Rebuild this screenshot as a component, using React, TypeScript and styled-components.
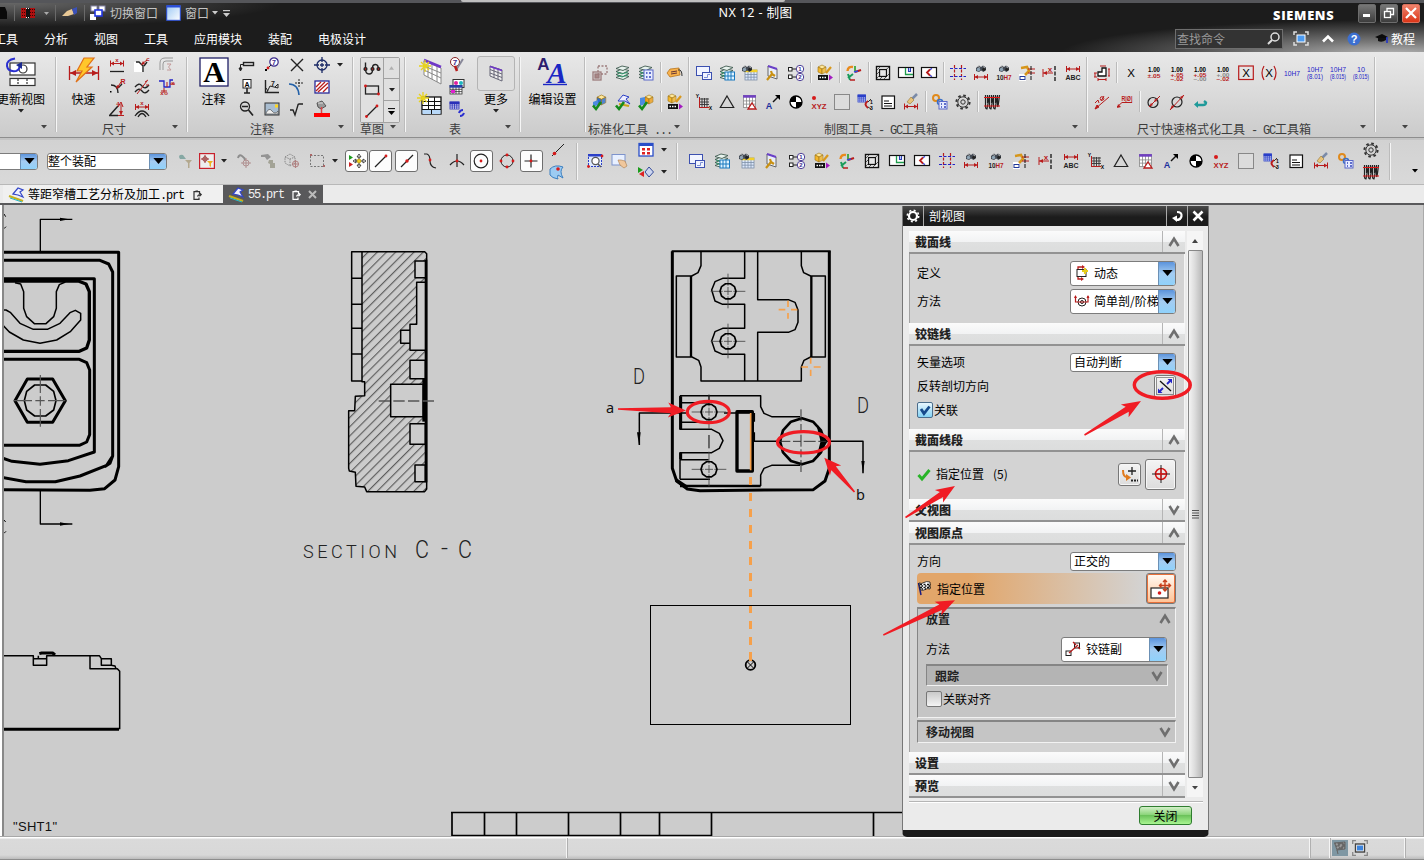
import React from "react";
import styled, { createGlobalStyle } from "styled-components";

const cjk = `"Noto Sans CJK SC", "Liberation Sans", sans-serif`;

const GlobalStyle = createGlobalStyle`
  * { box-sizing: border-box; }
  body { margin: 0; background: #ccc; overflow: hidden; font-family: ${cjk}; font-size: 12px; color: #000; }
  svg { display: block; flex: none; overflow: visible; }
`;

/* ---------- frame ---------- */
const Page = styled.div`
  position: relative;
  width: 1424px;
  height: 860px;
  display: flex;
  flex-direction: column;
  overflow: hidden;
  white-space: nowrap;
  line-height: 16px;
`;
const TopEdge = styled.div`
  height: 3px;
  flex: none;
  background: #55565a;
  padding-left: 461px;
`;
const TopEdgeTab = styled.div`
  width: 324px;
  height: 2px;
  background: #bfbfbf;
  border-radius: 0 0 4px 4px;
`;
const TitleArea = styled.header`
  height: 49px;
  flex: none;
  color: #fff;
  background:
    radial-gradient(ellipse 330px 34px at 1390px 51px, #b4b4b4 0%, #7a7a7a 35%, rgba(28, 28, 28, 0) 100%),
    radial-gradient(ellipse 270px 24px at 10px 0, #666 0%, rgba(28, 28, 28, 0) 100%),
    #1c1c1c;
`;
const TitleRow = styled.div`
  height: 22px;
  display: flex;
  align-items: center;
`;
const Quick = styled.div`
  display: flex;
  align-items: center;
  width: 719px;
  color: #c4c4c4;
  margin-top: -2px;
`;
const QuickSep = styled.i`
  width: 1px;
  height: 16px;
  background: #6a6a6a;
`;
const Gap = styled.i<{ $w: number }>`
  width: ${(p) => p.$w}px;
  flex: none;
`;
const AppTitle = styled.div`
  width: 554px;
  font-family: "Noto Sans", "Noto Sans CJK SC", sans-serif;
  font-size: 12.6px;
  letter-spacing: 0.35px;
  padding-bottom: 2px;
`;
const Brand = styled.div`
  width: 86px;
  font-family: "Open Sans", sans-serif;
  font-weight: 800;
  font-size: 12.8px;
  letter-spacing: 0.7px;
  padding: 1px 0 0 1px;
`;
const WinButton = styled.div<{ $close?: boolean }>`
  width: 18px;
  height: 19px;
  margin: -2px 4px 0 0;
  border-radius: 2px;
  border: 1px solid ${(p) => (p.$close ? "#d8705c" : "#6d6d6d")};
  background: ${(p) => (p.$close ? "linear-gradient(#f0836c,#dc3517)" : "linear-gradient(#777,#3d3d3d)")};
  display: flex;
  align-items: center;
  justify-content: center;
`;
const MenuRow = styled.div`
  height: 27px;
  display: flex;
  align-items: center;
`;
const Menu = styled.nav`
  display: flex;
  gap: 26px;
  margin-left: -6px;
  width: 1181px;
`;
const Search = styled.div`
  width: 108px;
  height: 20px;
  border: 1px solid #6e6e6e;
  background: #333;
  color: #999;
  display: flex;
  align-items: center;
  justify-content: space-between;
  padding: 0 2px 0 1px;
`;

/* ---------- ribbon ---------- */
const Ribbon = styled.div`
  height: 86px;
  flex: none;
  display: flex;
  background: linear-gradient(#e8e8e8, #dadada 50%, #cbcbcb);
  border-bottom: 1px solid #8e8e8e;
`;
const Group = styled.section<{ $w: number; $last?: boolean }>`
  width: ${(p) => p.$w}px;
  flex: none;
  display: flex;
  flex-direction: column;
  background: ${(p) => (p.$last ? "none" : "linear-gradient(90deg,#bcbcbc 1px,#f6f6f6 1px) right 5px / 2px 75px no-repeat")};
`;
const GroupBody = styled.div<{ $l?: number }>`
  height: 70px;
  display: flex;
  flex: none;
  padding-left: ${(p) => p.$l || 0}px;
`;
const Caption = styled.div<{ $l: number }>`
  display: flex;
  height: 15px;
  padding-left: ${(p) => p.$l}px;
  padding-right: 10px;
  color: #3c3c3c;
  line-height: 13px;
`;
const Launcher = styled.span`
  margin: 3px 0 0 auto;
`;
const Big = styled.div<{ $w: number }>`
  width: ${(p) => p.$w}px;
  flex: none;
  display: flex;
  flex-direction: column;
  align-items: center;
  padding-top: 5px;
`;
const BigLabel = styled.div`
  margin: 3px 0 1px;
  line-height: 18px;
`;
const IconGrid = styled.div<{ $cols: string }>`
  display: grid;
  grid-template-columns: ${(p) => p.$cols};
  grid-auto-rows: 22px;
  align-items: center;
  justify-items: center;
  align-self: flex-start;
  padding-top: 2px;
`;
const ToolRows = styled.div`
  padding: 6px 0 0 2.5px;
`;
const ToolRow = styled.div`
  display: flex;
  height: 29px;
  align-items: center;
`;
const Cell = styled.span<{ $w?: number }>`
  width: ${(p) => p.$w || 23}px;
  flex: none;
  display: flex;
  align-items: center;
  justify-content: center;
`;
const ToolSep = styled.i<{ $h?: number }>`
  width: 2px;
  height: ${(p) => p.$h || 21}px;
  margin: 0 2px;
  flex: none;
  background: linear-gradient(90deg, #bbb 1px, #f5f5f5 1px);
`;
const Half = styled.span`
  font-family: "Liberation Mono", monospace;
  letter-spacing: -1.2px;
`;
const Gallery = styled.div`
  display: grid;
  width: 40px;
  height: 66px;
  margin-top: 5px;
  grid-template-columns: 23px 15px;
  border: 1px solid #a2a2a2;
  border-radius: 2px;
`;
const GalleryItems = styled.div`
  display: grid;
  grid-template-rows: repeat(3, 1fr);
  place-items: center;
  background: #e0e0e0;
  border-right: 1px solid #a2a2a2;
`;
const GalleryNav = styled(GalleryItems)`
  border: 0;
  > * { width: 100%; height: 100%; display: grid; place-items: center; border-bottom: 1px solid #a2a2a2; }
  > *:last-child { border: 0; }
`;
const MoreFrame = styled.div`
  width: 38px;
  height: 35px;
  margin: -1px 0 -4px;
  border: 1px solid #b4b4b4;
  border-radius: 3px;
  background: #dedede;
  display: grid;
  place-items: center;
`;

/* ---------- selection bar ---------- */
const SelectBar = styled.div`
  height: 46px;
  flex: none;
  display: flex;
  align-items: center;
  padding-bottom: 2px;
  background: linear-gradient(#d2d2d2, #d9d9d9);
  border-top: 2px solid #c4c4c4;
`;
const ComboBox = styled.div<{ $w: number; $h: number; $ml?: number }>`
  width: ${(p) => p.$w}px;
  height: ${(p) => p.$h}px;
  margin-left: ${(p) => p.$ml || 0}px;
  flex: none;
  display: flex;
  align-items: stretch;
  background: #fff;
  border: 1px solid #7c7c7c;
  border-radius: 3px;
  overflow: hidden;
`;
const ComboText = styled.div<{ $tight?: boolean }>`
  flex: 1;
  display: flex;
  align-items: center;
  gap: 5px;
  overflow: hidden;
  padding-left: ${(p) => (p.$tight ? 0 : 3)}px;
`;
const ComboArrow = styled.div`
  width: 17px;
  flex: none;
  display: grid;
  place-items: center;
  border-left: 1px solid #6b90b5;
  background: linear-gradient(#5b93dc, #a4ccf1 50%, #8fd2fb);
`;
const Toggle = styled.span`
  width: 23px;
  height: 22px;
  flex: none;
  display: grid;
  place-items: center;
  background: #fdfdfd;
  border: 1px solid #6e6e6e;
  border-radius: 3px;
`;
const Stack = styled.span<{ $w: number }>`
  width: ${(p) => p.$w}px;
  height: 44px;
  flex: none;
  display: flex;
  flex-direction: column;
  align-items: center;
  justify-content: space-around;
`;

/* ---------- tabs ---------- */
const Tabs = styled.div`
  height: 21px;
  flex: none;
  display: flex;
  padding-left: 3px;
  background: #ebebeb;
  border-top: 1px solid #b8b8b8;
  border-bottom: 2px solid #59595b;
`;
const Tab = styled.div<{ $active?: boolean }>`
  width: ${(p) => (p.$active ? 100 : 220)}px;
  display: flex;
  align-items: center;
  padding: 1px 0 0 6px;
  color: ${(p) => (p.$active ? "#f2f2f2" : "#000")};
  background: ${(p) => (p.$active ? "#59595b" : "#f0f0f0")};
  gap: 3px;
`;

/* ---------- workspace ---------- */
const Workspace = styled.main`
  height: 632px;
  flex: none;
  padding-left: 2px;
  background: #fff;
  border-bottom: 1px solid #a8a8a8;
`;
const Sheet = styled.div`
  height: 631px;
  overflow: hidden;
  background: #ccc;
  border-left: 2px solid #888;
  border-right: 1px solid #aaa;
`;
const StatusBar = styled.footer`
  height: 23px;
  flex: none;
  display: flex;
  align-items: center;
  background: linear-gradient(#fff 1px, #dadada 2px, #d8d8d8 18px, #bcbcbc);
  border-bottom: 1px solid #8d8d8d;
`;
const StatusCell = styled.div<{ $w: number }>`
  width: ${(p) => p.$w}px;
  height: 20px;
  display: flex;
  align-items: center;
  gap: 4px;
  padding-left: 2px;
  border-right: 1px solid #f5f5f5;
  box-shadow: 1px 0 #b0b0b0;
`;

/* ---------- dialog ---------- */
const Dialog = styled.aside`
  position: absolute;
  left: 902px;
  top: 206px;
  width: 307px;
  height: 631px;
  background: #ebebeb;
  border: 1px solid #777;
  border-top: 0;
  border-bottom: 7px solid #1c1c1c;
  border-radius: 0 0 5px 5px;
`;
const DialogTitle = styled.div`
  height: 20px;
  display: flex;
  align-items: center;
  color: #fff;
  background: linear-gradient(#4a4a4a, #1c1c1c 55%);
`;
const TitleCell = styled.span<{ $w: number }>`
  width: ${(p) => p.$w}px;
  height: 20px;
  padding-left: ${(p) => (p.$w > 40 ? 5 : 0)}px;
  display: flex;
  align-items: center;
  justify-content: ${(p) => (p.$w > 40 ? "flex-start" : "center")};
  border-right: 1px solid ${(p) => (p.$w === 20 ? "transparent" : "#aaa")};
`;
const DialogMain = styled.div`
  display: flex;
  padding: 5px 5px 0 6px;
  gap: 2px;
`;
const Sections = styled.div`
  width: 276px;
`;
const Head = styled.div`
  height: 23px;
  display: flex;
  font-weight: 700;
  color: #222;
  background: linear-gradient(#fbfbfb, #f2f3f4 50%, #dfe0e0 52%, #dcdddd);
  border-bottom: 2px solid #929292;
  > b { flex: 1; padding: 3px 0 0 6px; }
  > i { width: 23px; border-left: 1px solid #b5b5b5; display: grid; place-items: center; }
`;
const Body = styled.div<{ $h: number; $t: number }>`
  height: ${(p) => p.$h}px;
  padding: ${(p) => p.$t}px 8px 0 7px;
  background: #d3d3d3;
  border-left: 1px solid #a3a3a3;
  border-right: 1px solid #f4f4f4;
`;
const Row = styled.div<{ $h: number }>`
  height: ${(p) => p.$h}px;
  display: flex;
  align-items: center;
  justify-content: space-between;
`;
const MethodRow = styled(Row)`
  margin-top: 5px;
`;
const Left = styled.span`
  display: flex;
  align-items: center;
  gap: 5px;
`;
const Count = styled.span`
  padding-left: 4px;
`;
const Right = styled(Left)`
  gap: 4px;
`;
const Check = styled.i<{ $on?: boolean }>`
  width: 16px;
  height: 16px;
  margin-right: -4px;
  border: 1px solid ${(p) => (p.$on ? "#4b6d8c" : "#777")};
  border-radius: 2px;
  background: ${(p) => (p.$on ? "linear-gradient(#e8f6ff,#84d3f5)" : "linear-gradient(#c9c9c9,#f4f4f4)")};
`;
const PushButton = styled.span<{ $w: number; $h: number; $hot?: boolean }>`
  width: ${(p) => p.$w}px;
  height: ${(p) => p.$h}px;
  display: grid;
  place-items: center;
  border: 1px solid #777;
  border-radius: 3px;
  box-shadow: inset 0 0 0 1px ${(p) => (p.$hot ? "#e8703a" : "#f6f6f6")};
  background: ${(p) => (p.$hot ? "linear-gradient(#fffaf4,#ffc294)" : "linear-gradient(#f4f4f4,#dcdcdc)")};
`;
const HotRow = styled(Row)`
  margin: 2px 0 3px;
  border-radius: 4px;
  background: linear-gradient(90deg, #e2a66a 0, #e2a66a 20%, #d3d3d3 88%);
`;
const SubPanel = styled.div<{ $h: number }>`
  height: ${(p) => p.$h}px;
  background: #c5c5c5;
  border: 1px solid #f2f2f2;
  border-top: 2px solid #858585;
  border-left-color: #858585;
  padding: 0 8px;
`;
const MovePanel = styled(SubPanel)`
  margin-top: 2px;
`;
const SubHead = styled.div<{ $h: number }>`
  height: ${(p) => p.$h}px;
  display: flex;
  align-items: center;
  justify-content: space-between;
  font-weight: 700;
  color: #222;
  margin-right: -4px;
`;
const TrackHead = styled(SubHead)`
  margin: 0 -1px 5px 0;
  padding: 0 4px 0 8px;
  background: #b4b4b4;
  border: 1px solid #f2f2f2;
  border-top: 2px solid #858585;
  border-left-color: #858585;
`;
const Scroll = styled.div`
  width: 16px;
  height: 566px;
  display: flex;
  flex-direction: column;
  align-items: center;
  background: #f5f5f5;
`;
const Thumb = styled.div`
  width: 15px;
  height: 528px;
  border: 1px solid #888;
  border-radius: 1px;
  background: linear-gradient(90deg, #f3f3f3, #dcdcdc 45%, #b9b9b9);
  display: grid;
  place-items: center;
`;
const ScrollBtn = styled.div`
  height: 19px;
  display: grid;
  place-items: center;
`;
const DialogFoot = styled.div`
  margin: 3px 5px 0 6px;
  height: 30px;
  border-top: 1px solid #b5b5b5;
  box-shadow: inset 0 1px #fff;
  display: flex;
  justify-content: flex-end;
  padding: 4px 11px 0 0;
`;
const CloseBtn = styled.div`
  width: 53px;
  height: 19px;
  border: 1px solid #2f7d2f;
  border-radius: 3px;
  text-align: center;
  line-height: 17px;
  background: linear-gradient(#d3f0c8, #8dd57c 45%, #6cc25b 50%, #a9f591);
`;
const Overlay = styled.svg`
  position: absolute;
  left: 0;
  top: 0;
  pointer-events: none;
`;

/* ---------- icons ---------- */
const R = "#b81c1c";
const B = "#2323c8";
const Dn = ({ c = "#222", w = 6 }: { c?: string; w?: number }) => (
  <svg width={w} height={w / 2 + 0.5} viewBox="0 0 6 3.5"><path d="M0 0H6L3 3.5Z" fill={c} /></svg>
);
const Chev = ({ up }: { up?: boolean }) => (
  <svg width="12" height="10" viewBox="0 0 12 10"><path d={up ? "M1.500 9 6 1.800 10.500 9" : "M1.500 1 6 8.200 10.500 1"} fill="none" stroke="#6f6f6f" strokeWidth="2.600" /></svg>
);
const T = ({ x = 8, y, s = 6, c = "#000", w = 700, len, children }: any) => (
  <text x={x} y={y} fontSize={s} fill={c} fontWeight={w} textAnchor="middle" textLength={len} lengthAdjust="spacingAndGlyphs" fontFamily="Liberation Sans, sans-serif">{children}</text>
);
const Bino = ({ x = 0, y = 0 }) => (
  <g transform={`translate(${x} ${y})`}>
    <path d="M1 3 4 .5 6 2 8 .5 11 2.500V5L8.500 7 6 5.500 4 7 1 6Z" fill="#444b55" />
    <circle cx="3.500" cy="4.500" r="1.700" fill="#8fa5b5" /><circle cx="9" cy="4.300" r="1.700" fill="#222" /><path d="M3 1.500 5 2.500M8 1.500 10 3" stroke="#aaa" />
  </g>
);
const DimH = ({ y = 13, x1 = 1.5, x2 = 14.5 }) => (
  <g stroke={R} fill={R}><path d={`M${x1} ${y - 3}v6M${x2} ${y - 3}v6M${x1} ${y}H${x2}`} fill="none" /><path d={`M${x1} ${y}l3.500-2v4zM${x2} ${y}l-3.500-2v4z`} stroke="none" /></g>
);
const Mesh = ({ x = 1, y = 1, w = 13, h = 12, head = "#7040c0", fill = "#fff", line = "#888" }) => (
  <g>
    <rect x={x} y={y} width={w} height={h} fill={fill} stroke={line} strokeWidth=".8" />
    <path d={`M${x} ${y + h * 0.45}h${w}M${x} ${y + h * 0.72}h${w}M${x + w * 0.25} ${y}v${h}M${x + w * 0.5} ${y}v${h}M${x + w * 0.75} ${y}v${h}`} stroke={line} strokeWidth=".8" />
    <rect x={x - 0.4} y={y - 0.4} width={w + 0.8} height="2.600" fill={head} />
  </g>
);
const Layers = () => (
  <g fill="#e8f3ee" stroke="#3f5a50" strokeWidth=".9">
    {[11, 8, 5, 2].map((y) => <path key={y} d={`M1 ${y + 1.5} 7 ${y - 1} 14 ${y + 0.5} 8 ${y + 3.5}Z`} />)}
    <path d="M2 7l5 2 6-2M2 10l5 2 6-2" fill="none" stroke="#2c9a6c" />
  </g>
);
const Cube = ({ x = 0, y = 0, c = "#f4b72b", s = 1 }) => (
  <g transform={`translate(${x} ${y}) scale(${s})`} stroke="#9a7010" strokeWidth=".6">
    <path d="M0 2 4 0 8 2 4 4Z" fill="#ffe89a" /><path d="M0 2 4 4V9L0 7Z" fill={c} /><path d="M8 2 4 4V9L8 7Z" fill={c} opacity=".8" />
  </g>
);
const Tick = () => <path d="M1 11.500 4 15 9 8" fill="none" stroke="#158a1c" strokeWidth="2.600" />;
const Dot = ({ x, y, r = 1.4 }: any) => <circle cx={x} cy={y} r={r} fill="#d61a1a" />;
const Gear = ({ c = "#333" }) => (
  <g fill="none" stroke={c}><circle cx="8" cy="8" r="6.600" strokeWidth="2" strokeDasharray="2.600 2.584" /><circle cx="8" cy="8" r="5.200" /><circle cx="8" cy="8" r="2.200" /></g>
);
const Tol = ({ a, b, ca = R, cb = R }: any) => (
  <g><T y={6.5} s={6.8} len={12}>1.00</T><T y={b ? 11.6 : 13} s={5} c={ca} len={13}>{a}</T>{b && <T y={16.200} s={5} c={cb} len={13}>{b}</T>}</g>
);
const Fit = ({ a, b }: any) => (
  <g><T y={6.500} s={7} w={400} c={B} len={a.length * 4}>{a}</T><T y={14} s={7} w={400} c={B} len={16}>{b}</T></g>
);

const art: Record<string, React.ReactNode> = {
  dimLin: <g><DimH y={6.500} /><T y={4.500} s={6} c={R}>x</T><path d="M1 14.500H15" stroke="#222" strokeWidth="1.300" /></g>,
  dimCh: <g><path d="M0 5H5L10 10V15H0Z" fill="#fff" /><path d="M2 5H5L9 9V15M10 9 13 5" fill="none" stroke="#222" strokeWidth="1.400" /><path d="M7 8 9 4 11 7Z" fill={R} /><path d="M8 7 13 3" stroke={R} /><T x={14} y={4} s={6} c={R}>c</T></g>,
  dimArc: <g fill="none" stroke="#999"><path d="M1 13V6Q1 1 6 1H14M4 13V7Q4 4 7 4H14" /><path d="M8 7H12L9.500 10 12 13H8" stroke="#c49a9a" /></g>,
  dimRad: <g><path d="M2 6Q9 6 9 14M9 9 13 5" fill="none" stroke="#222" strokeWidth="1.400" /><path d="M8 9 12 3" stroke={R} /><path d="M7 10 8 6 11 8Z" fill={R} /><T x={14} y={5} s={7} c={R}>R</T><rect x="1" y="12" width="1.500" height="1.500" /></g>,
  dimThk: <g fill="none"><path d="M1 8Q5 3 8 7T15 6M1 13Q5 8 8 12T15 11" stroke="#222" strokeWidth="1.300" /><path d="M3 15 13 2M11 3l3-2M12 6h3" stroke={R} /></g>,
  dimOrd: <g fill="none"><path d="M0 2H5V8H11V1H14" stroke={B} strokeWidth="1.300" /><path d="M8 3V8M11 5H16M5 9v5M2 12h6" stroke={R} /><T x={3} y={16} s={6} c={R}>x</T><T x={14} y={6} s={6} c={R}>x</T><T x={7} y={16} s={6} c={R}>o</T></g>,
  dimAng: <g><path d="M0 14.500H9M1 14 9 5" stroke="#222" strokeWidth="1.500" fill="none" /><path d="M12 3V14M9 14.500H15M9 6 12 1 14 6" fill="none" stroke={R} /><path d="M10 10 12 14 14 10Z" fill={R} /><T x={9} y={5} s={6} c={R}>4</T></g>,
  dimPer: <g><DimH y={6} /><T y={4} s={6} c={R}>x</T><path d="M1 15Q8 5 15 15M4 16Q8 9 12 16" fill="none" stroke="#222" strokeWidth="1.300" /></g>,
  leader: <g fill="none" stroke="#222"><rect x="4.500" y="5.500" width="10" height="3" strokeWidth="1.400" /><path d="M4 7.500H1.500V13" /><path d="M0 11H3L1.500 14Z" fill="#222" /></g>,
  balloon: <g><circle cx="10" cy="5" r="4.200" fill="#fff" stroke="#3a2a8c" strokeWidth="1.200" /><T x={10} y={7.500} s={7} c="#3a2a8c">7</T><path d="M1 14 7 8" stroke="#222" /><Dot x={4} y={11} /><rect x="1" y="12" width="2" height="2" /></g>,
  cross: <path d="M2 2 14 14M14 2 2 14" stroke="#222" strokeWidth="1.400" />,
  target: <g fill="none" stroke="#1b2a66" strokeWidth="1.300"><circle cx="8" cy="8" r="5" /><path d="M8 0V16M0 8H16" strokeDasharray="5 1 4 1" /></g>,
  datum: <g><rect x="4" y=".5" width="8" height="8.500" fill="#fff" stroke="#222" /><T y={7.500} s={7}>A</T><path d="M8 9v5M5 14H11" stroke="#222" strokeWidth="1.600" /></g>,
  weld: <g><path d="M1.500 1V13.500H15" fill="none" stroke="#222" strokeWidth="1.400" /><path d="M3 13 6 7 14 9V5L11 8M2 9l2 3" fill="none" stroke="#222" /><T x={9} y={7} s={7} c="#222">7</T></g>,
  inter: <g fill="none"><path d="M0 5Q9 5 10 16" stroke="#2260a8" strokeWidth="1.600" /><path d="M10 0V8M6 4H15" stroke="#222" strokeDasharray="2 1" /></g>,
  hatch: <g><rect x="1" y="2" width="14" height="12" fill="#fff" stroke="#2a2a99" strokeWidth="1.300" /><path d="M2 8 7 3M2 12 11 3M4 13 14 4M9 13 14 8" stroke={R} strokeWidth="1.300" /></g>,
  zoomout: <g fill="none" stroke="#222" strokeWidth="1.300"><circle cx="6" cy="5.500" r="4.500" /><path d="M3 5.500H9M9.500 9 14 14.500" strokeWidth="1.700" /></g>,
  photo: <g><rect x="1" y="2" width="14" height="12" fill="#a9bdd0" stroke="#333" /><path d="M2 12Q5 6 8 10T14 10V13H2Z" fill="#eee" stroke="#555" strokeWidth=".7" /><rect x="11" y="3.500" width="3" height="3" fill="#ffd61f" /></g>,
  surf: <path d="M1 9H4L6 14 9 4Q9 3 10 3H14" fill="none" stroke="#222" strokeWidth="1.400" />,
  paint: <g><path d="M3 2 8 0 12 5 7 8Q3 7 3 2Z" fill="#999" stroke="#555" /><path d="M4 2 9 2" stroke="#ddd" /><path d="M7.500 6V12" stroke="#d44" strokeWidth="1.500" /><rect x="0" y="12" width="16" height="4" fill="#f00" /></g>,
  skCurve: <g fill="none" stroke="#222" strokeWidth="1.400"><path d="M1.500 1.500V8Q1.500 13 5 13 8.500 13 8.500 9V7Q8.500 3.500 11.500 3.500 14.500 3.500 14.500 9" /><Dot x={1.500} y={8} /><Dot x={8.500} y={8} /><Dot x={14.500} y={8} /></g>,
  skRect: <g><rect x="1.500" y="4" width="13" height="8" fill="none" stroke="#222" strokeWidth="1.300" /><Dot x={1.500} y={4} /><Dot x={14.500} y={12} /></g>,
  line: <g><path d="M2 14 13 3" stroke="#222" strokeWidth="1.300" /><Dot x={2.500} y={13.500} /><Dot x={13} y={3} /></g>,
  lineEnd: <g><path d="M2 14 13 3" stroke="#222" strokeWidth="1.200" /><Dot x={13} y={3} /></g>,
  lineMid: <g><path d="M2 14 14 2" stroke="#222" strokeWidth="1.200" /><Dot x={8} y={8} r={1.700} /></g>,
  curvePt: <g><path d="M1 1H4Q7 2 7 8T13 15" fill="none" stroke="#222" strokeWidth="1.200" /><Dot x={7} y={7} /></g>,
  arcX: <g><path d="M8 1V14M1 12Q8 4 15 12" fill="none" stroke="#222" strokeWidth="1.200" /><Dot x={8} y={8} /></g>,
  circC: <g><circle cx="8" cy="8" r="6.800" fill="none" stroke="#222" strokeWidth="1.200" /><Dot x={8} y={8} /></g>,
  circQ: <g><circle cx="8" cy="8" r="6" fill="none" stroke="#222" /><Dot x={8} y={2} /><Dot x={8} y={14} /><Dot x={2} y={8} /><Dot x={14} y={8} /></g>,
  plus: <g><path d="M8 1.500V14.500M1.500 8H14.500" stroke="#222" strokeWidth="1.200" /><Dot x={8} y={8} /></g>,
  lineOn: <g><path d="M3 14 15 2" stroke="#222" /><Dot x={5.500} y={11.500} r={1.800} /></g>,
  face: <g><path d="M1 5Q6 0 14 3 10 7 14 14L9 11Q8 14 9 15 3 14 1 11Z" fill="#9ccbf2" stroke="#3b7fc0" /><Dot x={9} y={5} r={1.800} /></g>,
  snap: <g><path d="M0 2 4 4.500 0 7Z" fill="#1b9c1b" /><path d="M0 9 4 11.500 0 14Z" fill="#c22" /><path d="M10 1 12 4H8ZM10 15 12 12H8ZM17 8 14 6V10ZM4 8 7 6V10Z" fill="#fff" stroke="#222" strokeWidth=".8" /><path d="M10 4V12M6 8H14" stroke="#222" /><circle cx="10" cy="8" r="2" fill="#f1d11e" stroke="#a80" strokeWidth=".5" /></g>,
  stdShape: <g fill="none" stroke="#9c7c7c" strokeWidth="1.300"><rect x="1" y="7" width="8" height="8" /><rect x="6" y="1" width="9" height="8" strokeDasharray="2 1.500" /><rect x="3" y="9" width="4" height="4" fill="#a88" /></g>,
  layers: <Layers />,
  layersDoc: <g><Layers /><rect x="6" y="5" width="9" height="10" fill="#e7ecff" stroke="#5a68c8" /><path d="M8 8H9.500M11 8H13M8 12H9.500M11 12H13" stroke="#3344bb" strokeWidth="1.500" /></g>,
  tag: <g><path d="M0 8 3 4 12 3 13 10 3 12Z" fill="#f8b24c" stroke="#b06a10" strokeWidth=".7" /><path d="M4 7 10 6M4 9 10 8" stroke="#633" /><path d="M11 5Q15 4 15 11" fill="none" stroke="#333" /></g>,
  partOk: <g><Cube x={5} y={1} c="#2f6fd0" s={1.100} /><path d="M1 8 6 6V11L1 13Z" fill="#4c8be0" /><Tick /></g>,
  penOk: <g><path d="M3 7 8 1 14 3 11 5 15 10 10 7Z" fill="#eef" stroke="#2b3fc4" /><path d="M4 10 14 12" stroke="#caa31a" strokeWidth="2" /><Tick /></g>,
  boxOk: <g><Cube x={7} y={1} c="#f0a01c" /><path d="M2 4 7 3V10L2 12Z" fill="#4c8be0" /><Tick /></g>,
  win: <g fill="#f1f4ff" stroke="#3c50b0"><rect x=".5" y="1.500" width="13" height="9" /><rect x="6.500" y="7.500" width="9" height="7" /><path d="M8 12.500H11.500V9.500H14" fill="none" stroke="#7d90d8" /></g>,
  layTab: <g><Layers /><rect x="6" y="7" width="9.500" height="8" fill="#dff3ff" stroke="#1a7ac0" /><path d="M6 11H15.500M9 7V15M12 7V15" stroke="#1a7ac0" /></g>,
  binTab: <g><Mesh x={3} y={5} w={12} h={10} head="#f2cf28" fill="#dce8fb" line="#7d90a8" /><Bino x={-1} /></g>,
  sheet: <g><path d="M3 1 12 4V14L3 11Z" fill="#e8eef8" stroke="#666" /><path d="M3 1 12 4" stroke="#6a3fc8" strokeWidth="2" /><path d="M2 15 7 9 10 11M7 9 6 6" stroke="#c99112" strokeWidth="2.200" fill="none" /></g>,
  chain: <g fill="#fff" stroke="#222"><rect x=".5" y="2.500" width="3.500" height="3.500" /><rect x=".5" y="10" width="3.500" height="3.500" /><path d="M4 4H8M4 12H8" /><g stroke="#3a2a8c" strokeWidth=".9"><circle cx="12" cy="4" r="3.700" /><circle cx="12" cy="12" r="3.700" /></g><g stroke="none"><T x={12} y={6.200} s={6} c="#3a2a8c">1</T><T x={12} y={14.200} s={6} c="#3a2a8c">2</T></g></g>,
  boxPen: <g><Cube x={1} y={0} /><path d="M9 8 14 2" stroke="#d9981c" strokeWidth="2.200" /><rect x="1" y="10" width="10" height="5" fill="#111" /><path d="M2.500 12.500H10" stroke="#fff" strokeWidth="1.500" strokeDasharray="1.500 1" /><path d="M12 9.500 16 12.500 12 15.500Z" fill="#a31bc0" /></g>,
  axes: <g fill="none" strokeWidth="1.500"><path d="M7 2Q2 1 1.500 6" stroke="#e98a1c" strokeWidth="2.400" /><path d="M9 7V1" stroke="#1b9c1b" /><path d="M9 7 15 5" stroke={R} strokeWidth="2" /><path d="M8 7 12 6" stroke="#3048d8" /><path d="M2 9 4 15M2 13 7 9" stroke="#1b9c5b" strokeWidth="2" /><path d="M4 15H9" stroke={R} /></g>,
  frame: <g><rect x="1.500" y="1.500" width="13" height="13" fill="#fff" stroke="#111" strokeWidth="1.400" /><path d="M2 5 5 2M2 9 4 7M2 13 14 2M5 14 7 12M9 14 14 9" stroke="#333" strokeWidth=".8" /><rect x="4.500" y="4.500" width="7" height="7" fill="#e5e5e5" stroke="#111" strokeWidth="1.300" /></g>,
  rectU: <g><rect x=".5" y="2.500" width="15" height="10" fill="#fff" stroke="#111" strokeWidth="1.200" /><path d="M7.500 3V9.500H15" fill="none" stroke="#1f9b4c" strokeWidth="1.300" /><path d="M10.500 3V6.500H12.500V3" fill="#cdd6ff" stroke="#2a3fb5" strokeWidth="1.100" /></g>,
  rectC: <g><rect x=".5" y="2.500" width="15" height="10" fill="#fff" stroke="#111" strokeWidth="1.200" /><path d="M9 4.500 6 7.500 9 10.500" fill="none" stroke={R} strokeWidth="1.800" /><path d="M11 3.500 9 4.500M11 11.500 9 10.500" stroke={B} strokeWidth="1.200" /></g>,
  hash: <g fill="none" strokeWidth="1.200"><path d="M4.500 0V15M11.500 0V15" stroke={R} strokeDasharray="3 1.500" /><path d="M0 3.500H16M0 11.500H16" stroke={B} strokeDasharray="3 1.500" /></g>,
  binDim: <g><Bino x={2} y={0} /><DimH y={12} /></g>,
  bin10: <g><Bino x={2} y={0} /><T y={15} s={7.500} len={15} c="#222">10<tspan fill={R}>H7</tspan></T></g>,
  toolDim: <g><rect x="0" y="9" width="7" height="7" fill="#fff" /><rect x="1" y="11.500" width="5" height="3" fill="none" stroke="#223a99" /><path d="M2 3 8 2 10 6 6 10" fill="none" stroke="#d6961b" strokeWidth="2.500" /><path d="M9 4H16M9 8H16" stroke={R} /><path d="M12 1V16" stroke="#111" strokeDasharray="4 1" /></g>,
  dimX: <g><path d="M1 4V12M1 8H11" stroke={R} fill="none" /><path d="M1 8 5 6V10Z" fill={R} /><T x={8} y={6.500} s={8} c={R}>x</T><path d="M13 1V16" stroke="#111" strokeWidth="1.300" strokeDasharray="4 1.500" /></g>,
  abc: <g><DimH y={4} /><T y={15} s={7.500} c="#222" len={15}>ABC</T></g>,
  gridXY: <g><path d="M3.500 3V13.500H13M6 4V13M8.500 4V13M11 4V13M3 5H13M3 8H13M3 10.500H13" stroke="#333" strokeWidth=".9" fill="none" /><path d="M3.500 3V13.500H13" stroke={R} fill="none" /><T x={1.500} y={4} s={5}>Y</T><T x={14.500} y={16} s={5}>X</T></g>,
  tri: <path d="M8 2 14.700 13.500H1.300Z" fill="none" stroke="#222" strokeWidth="1.200" />,
  tabTri: <g><Mesh x={1.500} y={1.500} w={12} h={12} /><path d="M10 9 14 15H6Z" fill="#fff" stroke={R} strokeWidth="1.300" /></g>,
  aArrow: <g><T x={4} y={15} s={9} c="#1c2f9c">A</T><path d="M8 8 14 2" stroke="#111" strokeWidth="1.500" /><path d="M10 1H15V6Z" /></g>,
  cg: <g><circle cx="8" cy="8" r="6" fill="#fff" stroke="#000" strokeWidth="1.300" /><path d="M8 8V2A6 6 0 0 0 2 8ZM8 8V14A6 6 0 0 0 14 8Z" /></g>,
  xyz: <g><Dot x={3} y={4} r={2} /><T y={15} s={8} c={R} len={15}>XYZ</T></g>,
  blank: <rect x=".5" y=".5" width="15" height="15" fill="#dcdcdc" stroke="#888" strokeWidth="1" />,
  tabC: <g><Mesh x={1} y={1} w={7.500} h={7} head="#2a3fc8" line="#2a3fc8" /><path d="M11 7Q6 10 11 14" fill="none" stroke={R} strokeWidth="2" /><path d="M11 8 14 5M11 13 14 15" stroke="#333" /><T x={14.500} y={10} s={5}>1</T><T x={14.500} y={16} s={5}>3</T></g>,
  note: <g><rect x="2" y="2" width="12.500" height="12.500" fill="#fff" stroke="#111" strokeWidth="1.200" /><path d="M4 7H9M4 9.500H12M4 12H12" stroke="#111" strokeWidth="1.200" /></g>,
  brush: <g><path d="M14 0 9 5" stroke="#7b8ba8" strokeWidth="2.500" /><path d="M4 8 8 3 11 6 7 10Z" fill="#e8c37a" stroke="#997733" strokeWidth=".6" /><DimH y={12.500} /></g>,
  gearForm: <g><circle cx="4" cy="4" r="3" fill="none" stroke="#e08a1c" strokeWidth="2" /><circle cx="8" cy="8" r="2.500" fill="none" stroke="#3a70c8" strokeWidth="1.600" /><rect x="7" y="7.500" width="8" height="7.500" fill="#e7ecff" stroke="#5a68c8" /><path d="M9 10H10M12 10H14M9 13H10M12 13H14" stroke="#3344bb" strokeWidth="1.300" /></g>,
  gear: <Gear />,
  spring: <g fill="none"><path d="M1.500 1V12Q1.500 15 3 15L5.500 1V12Q5.500 15 7 15L9.500 1V12Q9.500 15 11 15L13.500 1V12Q14 15 15.500 1M3.500 1V9M7.500 1V9M11.500 1V9" stroke="#222" strokeWidth="1.200" /><path d="M0 3.500H16M0 12H16" stroke="#e01616" strokeWidth="1.200" /></g>,
  steps: <g fill="none"><path d="M4 11V7H8V3H12V11Z" fill="#fff" stroke="#111" strokeWidth="1.300" /><path d="M6 1H12M1 8V12M15 4V11M4 14.500H12M0 8H3M0 12H3M14 4H16M14 11H16M4 13V16M12 13V16" stroke={R} /></g>,
  x: <T y={12} s={11.500} w={400}>X</T>,
  t1: <Tol a="±.05" />,
  t2: <Tol a="+.05" b="−.02" />,
  t3: <Tol a="+.05" b="−.00" cb="#888" />,
  t4: <Tol a="+.00" b="−.02" ca="#888" />,
  xBox: <g><rect x=".7" y="1" width="14.600" height="13.500" fill="#e4e4e4" stroke={R} strokeWidth="1.200" /><T y={12} s={11.500} w={400}>X</T></g>,
  xPar: <g><T y={12} s={11.500} w={400}>X</T><path d="M3 1Q-1 8 3 15M13 1Q17 8 13 15" fill="none" stroke={R} strokeWidth="1.200" /></g>,
  h1: <T y={11} s={7.500} w={400} c={B} len={16}>10H7</T>,
  h2: <Fit a="10H7" b="(8.01)" />,
  h3: <Fit a="10H7" b="(8.015)" />,
  h4: <Fit a="10" b="(8.015)" />,
  rAlign: <g stroke={R} fill={R}><path d="M1 15 15 3" fill="none" /><path d="M1 15 3 11 5 13Z" /><circle cx="8" cy="4.500" r="1.800" fill="none" /><path d="M1 9 4 6 5 9M7 7 10 2" fill="none" /></g>,
  rHor: <g><path d="M0 13 5 8.500H15" stroke={R} fill="none" /><path d="M0 14 1 10 4 13Z" fill={R} /><T x={10} y={7} s={6.500} c={R} len={11}>R|Ø|</T></g>,
  diaIn: <g><circle cx="7" cy="8.500" r="5" fill="none" stroke="#222" strokeWidth="1.200" /><path d="M3 13 14 2" stroke={R} /><path d="M3 13 7 11 5 9ZM12 4 8 6 10 8Z" fill={R} /></g>,
  diaOut: <g><circle cx="8" cy="8" r="5" fill="none" stroke="#222" strokeWidth="1.200" /><path d="M1 16 15 1" stroke={R} /><path d="M1 16 3 11 5 13ZM15 1 11 3 13 5Z" fill={R} /></g>,
  undo: <g><path d="M4 11H11Q14 11 14 8.500L12 7" fill="none" stroke="#1f9a9a" strokeWidth="2.400" /><path d="M6 7V14L2 10.500Z" fill="#1f9a9a" /></g>,
  filt: <g><path d="M2 4Q2 1 6 2L9 6 3 6Z" fill="#86a8a4" /><path d="M8 7H15L12.500 10V15H11V10Z" fill="#b3a88e" /></g>,
  filtRed: <g><rect x=".6" y=".6" width="14.800" height="14.800" fill="#eee" stroke="#c8202c" strokeWidth="1.200" /><circle cx="6" cy="6" r="2.200" fill="none" stroke="#933" /><path d="M6 2V10M2 6H10" stroke="#933" /><path d="M8 8H14L12 10.500V14L10.500 13V10.500Z" fill="#f0b020" /></g>,
  gHook: <g fill="none" stroke="#8d8d8d"><path d="M2 5Q3 1 6 3T9 7" strokeWidth="2" /><circle cx="10" cy="10" r="3" stroke="#b09090" /><path d="M10 5V15M5 10H15" stroke="#b09090" /></g>,
  gFly: <g fill="#949494"><path d="M1 2 8 1 11 4 7 7 5 4 1 4Z" /><path d="M9 7H13V10H15V15H10V11L8 10Z" fill="#a3a396" /></g>,
  gCube: <g fill="none" stroke="#888"><path d="M1 4 6 1 11 4V10L6 13 1 10ZM1 4 6 6 11 4M6 6V13" strokeDasharray="1.500 1" /><circle cx="11.500" cy="11" r="3" stroke="#b08080" /><path d="M11.500 7V15M8 11H15" stroke="#b08080" /></g>,
  gRect: <g fill="none" stroke="#777"><rect x="1.500" y="2.500" width="13" height="11" strokeDasharray="2 1.500" /><path d="M1 2h2M14 13h2" stroke="#a66" strokeWidth="2" /></g>,
  zoomWin: <g><rect x="1.500" y="2" width="13" height="11.500" fill="#dfeaff" stroke="#2a3fc8" strokeDasharray="2 1" /><rect x="1" y="1" width="14" height="2.500" fill="#2a3fc8" /><circle cx="8.500" cy="8" r="3.600" fill="#fff" stroke="#555" strokeWidth="1.200" /><path d="M11 11 14 14" stroke="#555" strokeWidth="1.500" /><Dot x={1.500} y={13.500} /><Dot x={15} y={3} /></g>,
  pan: <g><rect x="1" y="1.500" width="13" height="10.500" fill="#e8f0ff" stroke="#7d93cc" /><path d="M7 7 10 7 14 8 16 13 13 15 9 12Z" fill="#f0c79c" stroke="#a87a4c" strokeWidth=".6" /></g>,
  fit: <g><rect x="1" y="1.500" width="14" height="12.500" fill="#fff" stroke="#2a4ec8" strokeWidth="1.300" /><rect x="1" y="1" width="14" height="3" fill="#2a4ec8" /><path d="M4 6h3v2.500H4zM9 6h3v2.500H9zM4 10h3v2.500H4zM9 10h3v2.500H9z" fill="#d22" /></g>,
  orient: <g><path d="M0 3 5 6 0 9Z" fill="#1b9c1b" /><path d="M1 10 6 7V13Z" fill="#d22" /><path d="M7 8 11 3 15.500 8 11 13Z" fill="#cdd6ef" stroke="#334a99" /></g>,
};
const Ico = ({ n, s = 16 }: { n: string; s?: number }) => <svg width={s} height={s} viewBox="0 0 16 16">{art[n]}</svg>;

const Line = ({ items, w }: { items: string; w?: number }) => (
  <>
    {items.split(" ").map((n, i) => (n === "|" ? <ToolSep key={i} /> : <Cell key={i} $w={w}><Ico n={n} /></Cell>))}
  </>
);
const Foot = ({ l, children }: any) => (
  <Caption $l={l}><span>{children}</span><Launcher><Dn c="#444" /></Launcher></Caption>
);
const Star = ({ x = 7, y = 8 }) => (
  <path d={`M${x - 6} ${y}H${x + 6}M${x} ${y - 6}V${y + 6}M${x - 4} ${y - 4}l8 8M${x + 4} ${y - 4}l-8 8`} stroke="#e8d21a" strokeWidth="1.300" />
);
const PrtIcon = () => (
  <svg width="16" height="15" viewBox="0 0 16 15"><path d="M4 7 9 1 14 3 11 5 14 10 9 8Z" fill="#eef0ff" stroke="#3346c8" strokeWidth="1.200" /><path d="M0 9 14 14" stroke="#c3b11e" strokeWidth="2.200" /><path d="M1 11 13 15" stroke="#28b5c8" /></svg>
);
const ClipIcon = ({ c }: { c: string }) => (
  <svg width="9" height="10" viewBox="0 0 9 10" fill="none" stroke={c} strokeWidth="1.200"><path d="M6 7.500V9.400H1V1.600H6.500V4M2.500 1H5" /><path d="M4.500 6.500Q5 4.500 8 4.500M6.500 3 8.200 4.600 6.500 6.200" /></svg>
);

const Header = () => (
  <TitleArea>
    <TitleRow>
      <Quick>
        <svg width="8" height="14" viewBox="0 0 8 14"><path d="M0 1H5L7 6V13H0Z" fill="#0a0a0a" /></svg>
        <Gap $w={6} /><QuickSep /><Gap $w={6} />
        <svg width="14" height="12" viewBox="0 0 14 12"><rect x="0" y="1" width="5" height="10" fill="#b01010" /><rect x="9" y="1" width="5" height="10" fill="#b01010" /><path d="M1 2.500H14M1 5.500H14M1 8.500H14" stroke="#3a0505" strokeWidth="1" strokeDasharray="1 1" /><rect x="5" y="1" width="4" height="10" fill="#111" /><path d="M5 1.500H9M5 10.500H9" stroke="#eee" strokeDasharray="1 1" /></svg>
        <Gap $w={9} /><Dn c="#aaa" w={5} /><Gap $w={6} /><QuickSep /><Gap $w={6} />
        <svg width="16" height="12" viewBox="0 0 16 12"><path d="M0 9 5 4 10 2 12 7 6 9Z" fill="#e8c895" /><path d="M10 2 15 0V6L12 8Z" fill="#3a50b8" /></svg>
        <Gap $w={6} /><QuickSep /><Gap $w={5} />
        <svg width="16" height="16" viewBox="0 0 16 16"><rect x="1" y="1" width="6" height="5" fill="#fff" stroke="#88a" /><rect x="9" y="1" width="6" height="5" fill="#fff" stroke="#88a" /><rect x="0" y="9" width="6" height="6" fill="#fff" /><rect x="5" y="5" width="7" height="6" fill="#fff" stroke="#2337e0" strokeWidth="1.600" /></svg>
        <Gap $w={4} />切换窗口<Gap $w={8} />
        <svg width="15" height="16" viewBox="0 0 15 16"><defs><linearGradient id="qw" x2="1" y2="1"><stop stopColor="#9cc8f4" /><stop offset="1" stopColor="#fff" /></linearGradient></defs><rect x=".7" y=".7" width="13.600" height="14.600" fill="url(#qw)" stroke="#2a4ed8" /><path d="M1 1.500H14" stroke="#2a4ed8" strokeWidth="2" /></svg>
        <Gap $w={4} />窗口<Gap $w={3} /><Dn c="#ccc" /><Gap $w={5} />
        <svg width="7" height="7" viewBox="0 0 7 7"><path d="M0 .6H7" stroke="#ccc" strokeWidth="1.200" /><path d="M0 3H7L3.500 7Z" fill="#ccc" /></svg>
      </Quick>
      <AppTitle>NX 12 - 制图</AppTitle>
      <Brand>SIEMENS</Brand>
      <WinButton><svg width="10" height="10"><rect x="1" y="6" width="7" height="3" fill="#fff" /></svg></WinButton>
      <WinButton><svg width="12" height="12" fill="none" stroke="#fff" strokeWidth="1.300"><path d="M4 4V1.500H10.500V7.500H8" /><rect x="1.500" y="4.500" width="6" height="6" /></svg></WinButton>
      <WinButton $close><svg width="14" height="14"><path d="M2 2 12 12M12 2 2 12" stroke="#fff" strokeWidth="2.200" /></svg></WinButton>
    </TitleRow>
    <MenuRow>
      <Menu>{["工具", "分析", "视图", "工具", "应用模块", "装配", "电极设计"].map((t, i) => <span key={i}>{t}</span>)}</Menu>
      <Search>查找命令<svg width="13" height="13" viewBox="0 0 13 13" fill="none" stroke="#ddd" strokeWidth="1.500"><circle cx="8" cy="5" r="4" /><path d="M5 8 1 12" strokeWidth="2" /></svg></Search>
      <Gap $w={10} />
      <svg width="16" height="15" viewBox="0 0 16 15"><path d="M1 4V1H4M12 1H15V4M15 11V14H12M4 14H1V11" fill="none" stroke="#ddd" strokeWidth="1.500" /><rect x="4" y="4" width="8" height="7" fill="#4d9bf0" stroke="#fff" /></svg>
      <Gap $w={13} />
      <svg width="12" height="9" viewBox="0 0 12 9"><path d="M1 7.500 6 2.500 11 7.500" fill="none" stroke="#fff" strokeWidth="2.600" /></svg>
      <Gap $w={13} />
      <svg width="14" height="14" viewBox="0 0 14 14"><circle cx="7" cy="7" r="6.500" fill="#3c6fd0" /><text x="7" y="10.800" textAnchor="middle" fontSize="11" fontWeight="700" fill="#fff" fontFamily="Liberation Sans">?</text></svg>
      <Gap $w={14} />
      <svg width="14" height="11" viewBox="0 0 14 11"><path d="M0 4 7 1 13 4 7 7Z" fill="#0b0b0b" /><path d="M3 5V8Q7 10 11 7V5Z" fill="#111" /><path d="M12 4V10" stroke="#2234c8" strokeWidth="1.600" /></svg>
      <Gap $w={2} />教程
    </MenuRow>
  </TitleArea>
);

const gcTop = "win layTab binTab sheet chain | boxPen | axes | frame rectU rectC | hash binDim bin10 toolDim dimX abc";
const gcBottom = "gridXY tri tabTri aArrow cg xyz blank tabC note brush | gearForm gear | spring";

const RibbonBar = () => (
  <Ribbon>
    <Group $w={57}>
      <GroupBody>
        <Big $w={42}>
          <svg width="32" height="30" viewBox="0 0 32 30"><g fill="#fff" stroke="#333" strokeWidth="1.200"><rect x="5" y="6" width="25" height="12" /><rect x="5" y="21.500" width="25" height="7" /><circle cx="18" cy="12" r="4" /><path d="M13 22V29M22 22V29" strokeDasharray="2 1" /></g><path d="M10 1.500Q1 3 2 9T11 14Q15 13 15 7" fill="none" stroke="#2a2fd0" strokeWidth="2" /><path d="M11 8 17 5 17 12Z" fill="#1b2a90" /></svg>
          <BigLabel>更新视图</BigLabel><Dn />
        </Big>
      </GroupBody>
      <Foot l={0} />
    </Group>
    <Group $w={131}>
      <GroupBody $l={6}>
        <Big $w={41}>
          <svg width="32" height="30" viewBox="0 0 32 30"><path d="M1.500 9V23M30.500 9V23M2 16H30" stroke={R} strokeWidth="1.300" /><path d="M2 16 8 13V19ZM30 16 24 13V19Z" fill={R} /><path d="M16 1H26L19 10H24L8 25 14 14H9Z" fill="#ffc72b" stroke="#e07018" strokeWidth="1.200" /></svg>
          <BigLabel>快速</BigLabel>
        </Big>
        <IconGrid $cols="repeat(3,25px)">{"dimLin dimCh dimArc dimRad dimThk dimOrd dimAng dimPer".split(" ").map((n) => <Ico key={n} n={n} />)}</IconGrid>
      </GroupBody>
      <Foot l={45}>尺寸</Foot>
    </Group>
    <Group $w={166}>
      <GroupBody $l={5}>
        <Big $w={41}>
          <svg width="30" height="30" viewBox="0 0 30 30"><rect x="1" y="1" width="28" height="28" fill="#fff" stroke="#1f1f66" strokeWidth="1.300" /><text x="15" y="25" textAnchor="middle" fontSize="30" fontWeight="700" fontFamily="Liberation Serif">A</text></svg>
          <BigLabel>注释</BigLabel>
        </Big>
        <IconGrid $cols="repeat(4,25px) 12px">
          {"leader balloon cross target".split(" ").map((n) => <Ico key={n} n={n} />)}<Dn />
          {"datum weld inter hatch".split(" ").map((n) => <Ico key={n} n={n} />)}<i />
          {"zoomout photo surf paint".split(" ").map((n) => <Ico key={n} n={n} />)}
        </IconGrid>
      </GroupBody>
      <Foot l={62}>注释</Foot>
    </Group>
    <Group $w={52}>
      <GroupBody $l={6}>
        <Gallery>
          <GalleryItems><Ico n="skCurve" /><Ico n="skRect" /><Ico n="line" /></GalleryItems>
          <GalleryNav>
            <span><svg width="5" height="4" viewBox="0 0 6 4"><path d="M0 4H6L3 0Z" fill="#b0b0b0" /></svg></span>
            <span><Dn /></span>
            <span><svg width="7" height="7" viewBox="0 0 7 7"><path d="M0 .6H7" stroke="#000" /><path d="M0 3H7L3.500 7Z" /></svg></span>
          </GalleryNav>
        </Gallery>
      </GroupBody>
      <Foot l={6}>草图</Foot>
    </Group>
    <Group $w={115}>
      <GroupBody $l={9}>
        <Big $w={29}>
          <svg width="26" height="64" viewBox="0 0 26 64">
            <g strokeWidth="1" stroke="#888"><path d="M7 4 24 11V27L7 18Z" fill="#fff" /><path d="M7 9 24 16M7 13 24 21M11 6V20M15 7V22M20 9V25" /></g><path d="M7 3 24 10" stroke="#7038c8" strokeWidth="2.500" />
            <Star x={8} y={9} />
            <g><rect x="5" y="40" width="19" height="17" fill="#fff" stroke="#111" strokeWidth="1.300" /><rect x="5.500" y="52.500" width="18" height="4.500" fill="#b8d8f8" /><path d="M5 44.500H24M5 48.500H24M5 52.500H24M11.500 40V52M17.500 40V52M14.500 52V57" stroke="#111" strokeWidth="1" /></g>
            <Star x={6} y={41} />
          </svg>
        </Big>
        <IconGrid $cols="25px">
          <svg width="16" height="16" viewBox="0 0 16 16"><circle cx="6" cy="5" r="4.500" fill="#fff" stroke="#822" /><T x={6} y={8} s={8} c="#3a2a8c">7</T><path d="M14 2 7 13" stroke="#889" strokeWidth="2" /><path d="M6 9 8 14" stroke={R} strokeWidth="2.500" /></svg>
          <svg width="16" height="16" viewBox="0 0 16 16"><rect x="4" y=".5" width="11" height="8" fill="#fff" stroke="#333" /><circle cx="7" cy="4" r="2" fill="#e020a0" /><circle cx="12" cy="4" r="2" fill="#20b8c0" /><Mesh x={1} y={6.500} w={12} h={8.500} head="#2a3fa8" line="#333" /><rect x="2" y="11" width="4" height="3" fill="#e020d0" /></svg>
          <svg width="16" height="16" viewBox="0 0 16 16"><Mesh x={1} y={1} w={9} h={7} head="#2a2fb8" line="#2a2fb8" /><path d="M10 12Q11 9 14 9M15 12Q14 15 11 15" fill="none" stroke="#2a2fd0" strokeWidth="2" /></svg>
        </IconGrid>
        <Gap $w={8} />
        <Big $w={38}>
          <MoreFrame><svg width="14" height="17" viewBox="0 0 14 17"><path d="M1 1 13 5V16L1 11Z" fill="#eee" stroke="#667" /><path d="M1 4.500 13 9M1 8 13 12.500M5 2V13M9 3V14" stroke="#667" /><path d="M1 1.500 13 5.500" stroke="#7038c8" strokeWidth="1.800" /></svg></MoreFrame>
          <BigLabel>更多</BigLabel><Dn />
        </Big>
      </GroupBody>
      <Foot l={43}>表</Foot>
    </Group>
    <Group $w={65}>
      <GroupBody $l={5}>
        <Big $w={53}>
          <svg width="32" height="30" viewBox="0 0 32 30"><text x="6.500" y="13" textAnchor="middle" fontSize="17" fontWeight="700" fill="#2c1d6e" fontFamily="Liberation Sans">A</text><text x="20" y="26" textAnchor="middle" fontSize="29" fontWeight="700" fontStyle="italic" fill="#1a27c4" fontFamily="Liberation Serif">A</text><path d="M6 27.500H30" stroke="#1a27c4" strokeWidth="1.400" /></svg>
          <BigLabel>编辑设置</BigLabel>
        </Big>
      </GroupBody>
    </Group>
    <Group $w={104}>
      <GroupBody><ToolRows><ToolRow><Line items="stdShape layers layersDoc | tag" /></ToolRow><ToolRow><Line items="partOk penOk boxOk | boxPen" /></ToolRow></ToolRows></GroupBody>
      <Foot l={2}>标准化工具<Half> ...</Half></Foot>
    </Group>
    <Group $w={398}>
      <GroupBody><ToolRows><ToolRow><Line items={gcTop} /></ToolRow><ToolRow><Line items={gcBottom} /></ToolRow></ToolRows></GroupBody>
      <Foot l={134}>制图工具<Half> - GC</Half>工具箱</Foot>
    </Group>
    <Group $w={288}>
      <GroupBody><ToolRows><ToolRow><Line items="steps | x t1 t2 t3 t4 xBox xPar h1 h2 h3 h4" /></ToolRow><ToolRow><Line items="rAlign rHor | diaIn diaOut undo" /></ToolRow></ToolRows></GroupBody>
      <Foot l={49}>尺寸快速格式化工具<Half> - GC</Half>工具箱</Foot>
    </Group>
    <Group $w={42} $last><GroupBody /><Foot l={0} /></Group>
  </Ribbon>
);

const SelectionBar = () => (
  <SelectBar>
    <ComboBox $w={60} $h={17} $ml={-22}><ComboText /><ComboArrow><Dn c="#000" w={11} /></ComboArrow></ComboBox>
    <ComboBox $w={120} $h={17} $ml={9}><ComboText $tight>整个装配</ComboText><ComboArrow><Dn c="#000" w={11} /></ComboArrow></ComboBox>
    <Gap $w={10} /><Ico n="filt" /><Gap $w={6} /><Ico n="filtRed" /><Gap $w={6} /><Dn /><Gap $w={9} />
    <Ico n="gHook" /><Gap $w={8} /><Ico n="gFly" /><Gap $w={8} /><Ico n="gCube" /><Gap $w={9} /><Ico n="gRect" /><Gap $w={7} /><Dn />
    <Gap $w={7} /><Toggle><Ico n="snap" /></Toggle><Gap $w={1} /><Toggle><Ico n="lineEnd" /></Toggle><Gap $w={3} /><Toggle><Ico n="lineMid" /></Toggle>
    <Gap $w={4.500} /><Ico n="curvePt" /><Gap $w={10} /><Ico n="arcX" /><Gap $w={5} /><Toggle><Ico n="circC" /></Toggle>
    <Gap $w={6} /><Ico n="circQ" /><Gap $w={5} /><Toggle><Ico n="plus" /></Toggle>
    <Gap $w={2} /><Stack $w={24}><Ico n="lineOn" /><Ico n="face" /></Stack>
    <Gap $w={5} /><ToolSep $h={37} /><Gap $w={7} /><Ico n="zoomWin" /><Gap $w={8} /><Ico n="pan" />
    <Gap $w={7} /><Stack $w={24}><Ico n="fit" /><Ico n="orient" /></Stack><Gap $w={3} /><Stack $w={6}><Dn /><Dn /></Stack>
    <Gap $w={7} /><ToolSep $h={37} /><Gap $w={5} />
    <Line w={24.960} items={(gcTop + " " + gcBottom.replace(" gear |", "").replace(" spring", "")).replace(/\| /g, "")} />
    <Stack $w={25}><Ico n="gear" /><Ico n="spring" /></Stack>
    <Gap $w={4} /><ToolSep $h={37} /><Gap $w={19} /><Stack $w={6}><i /><Dn c="#000" /></Stack>
  </SelectBar>
);

/* ---------- drawing sheet ---------- */
const Hole = ({ x, y }: { x: number; y: number }) => (
  <g><path d={`M${x - 52} ${y}h104M${x} ${y - 53}v106`} stroke="#444" strokeWidth="2.500" strokeDasharray="36 4 24 4" /><polygon points={[0, 1, 2, 3, 4, 5, 6, 7, 8, 9].map((k) => `${x + 24 * Math.cos(k * 0.6283)},${y + 24 * Math.sin(k * 0.6283)}`).join(" ")} strokeWidth="5" /></g>
);
const SheetSvg = styled.svg`
  overflow: hidden;
`;
const Drawing = () => (
  <SheetSvg width="1419" height="631" viewBox="4 205 1419 631" fill="none" stroke="#000">
    <defs><pattern id="sec" width="19.500" height="19.500" patternUnits="userSpaceOnUse" patternTransform="rotate(45)"><path d="M2 0V19.500" stroke="#222" strokeWidth="2.300" /></pattern></defs>
    <g transform="translate(0 200) scale(.33333)" strokeWidth="9" strokeLinejoin="round">
      <path d="M12 42 17 50M12 86 18 80M12 960 17 966M12 1000 18 994" strokeWidth="3" />
      <path d="M121 157V58H217M121 870V972H217" strokeWidth="4" /><path d="M180 53 208 58 180 63ZM180 967 208 972 180 977Z" fill="#000" stroke="none" />
      <path d="M0 157H356V800L345 840 314 866 270 871 0 869" strokeWidth="9" />
      <path d="M0 181H300L326 192 338 216V768L320 796 240 828 166 845H78L0 831M338 768 330 790 314 800" />
      <path d="M0 236H283V756L205 782 120 793 36 784 0 772" />
      <path d="M0 243H235L258 252 268 275V420L260 444 238 454H0" strokeWidth="10" />
      <path d="M0 478H238L260 488 269 510V704L260 726 238 736H0" strokeWidth="9" />
      <path d="M45 248 62 252 71 275V325L80 350 103 371H138L161 350 169 325V275L178 254 196 246M0 330H18L32 338 60 370 100 388H142L180 370 210 338 226 331 242 340V360L212 394 170 420 120 430 70 420 28 396 0 366" strokeWidth="4.500" />
      <polygon points="45,602 82,537 158,537 196,602 158,667 82,667" strokeWidth="9" />
      <polygon points="104,555 137,555 161,574 168,602 161,630 137,648 104,648 80,630 73,602 80,574" strokeWidth="5" />
      <path d="M42 602H196M121 525V680" stroke="#555" strokeWidth="3.500" strokeDasharray="54 10 28 10" />
    </g>
    <g transform="translate(320 235) scale(.33333)" strokeWidth="4.500" strokeLinejoin="round">
      <path d="M126 50H314L320 56V762L314 770H140L134 756 108 754 106 712 88 708 86 700V527H104L106 484 134 482V440H126Z" fill="url(#sec)" />
      <path d="M126 50H95V438H126M95 130H126M95 208H126M95 280H126M95 357H126" />
      <g fill="#ccc"><path d="M285 78H318V128H285ZM290 142H318V346H270V268H290ZM242 286H270V325H242ZM270 376H316V431H270ZM212 448H310V545H212ZM270 566H316V628H270ZM285 690H316V740H285Z" /></g>
      <path d="M318 74V742" strokeWidth="8" /><path d="M314 432V560" strokeWidth="14" />
      <path d="M176 498H348" stroke="#555" strokeWidth="4" strokeDasharray="34 10" />
    </g>
    <g transform="translate(600 235) scale(.33333)" strokeWidth="4.500" strokeLinejoin="round">
      <path d="M215 49H692" strokeWidth="6" /><path d="M217 49V700L230 738 262 762 300 767 640 764 675 738 688 700V49" strokeWidth="9" />
      <path d="M303 49V92L294 113 275 123H229V366H276L296 376 303 396V438H604V396L612 376 632 366H676V123H632L611 113 604 92V49" />
      <path d="M273 123V366M634 123V366" strokeWidth="7" />
      <path d="M434 49V130H368L345 140 335 165 345 198 368 208H434V280H368L345 290 335 318 345 348 368 358H434V438M473 49V194H565L585 202 594 225V262L585 284 565 292H473V438" />
      <Hole x={384} y={169} /><Hole x={384} y={319} />
      <path d="M118 630V534H260M240 482H482V515L492 535 515 545H600M240 482V583H335L358 595 369 617 358 640 335 653H240V733M482 753V720L492 700 515 691H600M240 503H326M240 562H326M240 674H326M240 733H330" />
      <path d="M242 484V583M242 653V672" strokeWidth="9" /><path d="M240 753H482" strokeWidth="7" />
      <path d="M228 735 262 757" strokeWidth="10" />
      <path d="M372 534H460M463 534V560M463 592V619H545M660 619H789V715" /><path d="M111 592H122L117 630ZM784 678H794L789 715Z" fill="#000" stroke="none" />
      <rect x="411" y="530" width="46" height="178" strokeWidth="10" />
      <Hole x={327} y={531} /><Hole x={327} y={703} />
      <path d="M327 482V508M327 600V640" strokeWidth="3" />
      <polygon points="540,619 549,586 573,560 606,550 639,560 663,586 674,619 663,652 639,678 606,688 573,678 549,652" strokeWidth="8" />
      <path d="M652 572 668 598 680 619 668 640 652 666 664 619Z" fill="#000" />
      <path d="M535 619H680M603 523V714" stroke="#333" strokeWidth="3" strokeDasharray="36 8 24 8" />
      <g stroke="#f6a04a" strokeWidth="5"><path d="M564 197V216M564 234V251M536 224H556M573 224H592M632 368V386M632 404V423M604 396H624M641 396H662M452 534V706" /></g>
    </g>
    <path d="M750.500 477V661" stroke="#f6a04a" strokeWidth="3" strokeDasharray="8 8" />
    <rect x="650.500" y="605.500" width="200" height="119" strokeWidth="1" />
    <circle cx="750.500" cy="665" r="4.800" strokeWidth="1.800" /><path d="M747.500 662 753.500 668M753.500 662 747.500 668" />
    <path d="M750.500 652V661" stroke="#f6a04a" strokeWidth="3" />
    <g strokeWidth="1.700"><path d="M451 812.500H904M452 812V837M484.500 812V837M516.500 812V837M568.500 812V837M620.500 812V837M659.500 812V837M711.500 812V837M452 835.500H711M873.500 812V837" /></g>
    <g transform="translate(0 640) scale(.33333)" strokeWidth="4.500" strokeLinejoin="round">
      <path d="M0 47H100V76H140V47H298L304 56M270 47V86H352L359 94V268M304 56H334V76H304ZM334 76 345 78 348 86M115 47V56H138M100 56H140" />
      <path d="M0 268H357" strokeWidth="9" /><path d="M118 41 125 39H158L165 45" strokeWidth="9" />
    </g>
    <g stroke="none" fill="#222" fontFamily="Roboto, sans-serif" fontWeight="300">
      <text x="303" y="557.500" fontSize="18" textLength="94">SECTION</text>
      <text x="415" y="558" fontSize="26.500" textLength="14" lengthAdjust="spacingAndGlyphs">C</text>
      <text x="441" y="557" fontSize="26" textLength="7" lengthAdjust="spacingAndGlyphs">-</text>
      <text x="458" y="558" fontSize="26.500" textLength="14" lengthAdjust="spacingAndGlyphs">C</text>
      <text x="633" y="384" fontSize="22" textLength="12" lengthAdjust="spacingAndGlyphs">D</text>
      <text x="857" y="413" fontSize="22" textLength="12" lengthAdjust="spacingAndGlyphs">D</text>
    </g>
    <g stroke="none" fill="#111">
      <text x="13" y="831" fontSize="13" fontFamily="Liberation Sans" textLength="44">"SHT1"</text>
      <text x="606" y="413" fontSize="14.500" fontFamily="Noto Sans">a</text>
      <text x="856" y="500" fontSize="14.500" fontFamily="Noto Sans">b</text>
    </g>
  </SheetSvg>
);

/* ---------- section view dialog ---------- */
const Combo = ({ h, w = 106, icon, children }: any) => (
  <ComboBox $w={w} $h={h}><ComboText>{icon}{children}</ComboText><ComboArrow><Dn c="#000" w={11} /></ComboArrow></ComboBox>
);
const SectionHead = ({ t, up }: { t: string; up?: boolean }) => <Head><b>{t}</b><i><Chev up={up} /></i></Head>;

const SectionDialog = () => (
  <Dialog>
    <DialogTitle>
      <TitleCell $w={21}><svg width="14" height="14" viewBox="0 0 14 14" fill="none" stroke="#fff"><circle cx="7" cy="7" r="4" strokeWidth="2.200" /><circle cx="7" cy="7" r="5.700" strokeWidth="1.600" strokeDasharray="2 2.470" /></svg></TitleCell>
      <TitleCell $w={244}>剖视图</TitleCell>
      <TitleCell $w={21}><svg width="12" height="12" viewBox="0 0 12 12"><path d="M6 2Q11 2 10.500 6T5 10" fill="none" stroke="#fff" strokeWidth="2.200" /><path d="M1 8 6 5.500V12Z" fill="#fff" /></svg></TitleCell>
      <TitleCell $w={20}><svg width="12" height="12"><path d="M1.500 1.500 10.500 10.500M10.500 1.500 1.500 10.500" stroke="#fff" strokeWidth="2.600" /></svg></TitleCell>
    </DialogTitle>
    <DialogMain>
      <Sections>
        <SectionHead t="截面线" up />
        <Body $h={69} $t={5}>
          <Row $h={28}>定义<Combo h={25} icon={<svg width="15" height="16" viewBox="0 0 15 16"><rect x="3" y="4.500" width="9" height="7" fill="#fff" stroke="#222" /><path d="M9 2H4V4M8 14H4V12" fill="none" stroke={R} strokeWidth="1.300" /><path d="M8 0V4L11 2ZM7 12V16L10 14Z" fill={R} /><path d="M11 3V9M8 6H14" stroke="#e8cc1a" strokeWidth="2.200" /></svg>}>动态</Combo></Row>
          <Row $h={28}>方法<Combo h={25} icon={<svg width="15" height="12" viewBox="0 0 15 12" fill="none"><circle cx="8" cy="7" r="4" stroke="#222" /><circle cx="8" cy="7" r="1.500" stroke="#222" /><path d="M1.500 1V7H14V1" stroke={R} strokeWidth="1.200" /><path d="M0 3 1.500 0 3 3ZM12.500 3 14 0 15.500 3Z" fill={R} /></svg>}>简单剖/阶梯</Combo></Row>
        </Body>
        <SectionHead t="铰链线" up />
        <Body $h={83} $t={4}>
          <Row $h={24}>矢量选项<Combo h={19}>自动判断</Combo></Row>
          <Row $h={24}>反转剖切方向<PushButton $w={22} $h={23}><svg width="18" height="18" viewBox="0 0 18 18"><rect x=".5" y=".5" width="17" height="17" fill="none" stroke="#333" strokeDasharray="1 1" /><path d="M4 4 15 14" stroke="#111" strokeWidth="1.300" /><path d="M11 7 14 4M4 14 7 11" stroke={B} strokeWidth="1.800" /><path d="M11.500 2H16V6.500ZM2 11.500V16H6.500Z" fill={B} /></svg></PushButton></Row>
          <Row $h={24}><Left><Check $on><svg width="14" height="14"><path d="M3 6 6 10.500 11.500 3.500" fill="none" stroke="#164a8c" strokeWidth="2.800" /></svg></Check>关联</Left></Row>
        </Body>
        <SectionHead t="截面线段" up />
        <Body $h={47} $t={6}>
          <Row $h={32}>
            <Left><svg width="14" height="13" viewBox="0 0 14 13"><path d="M1.500 7 5 11 12.500 2" fill="none" stroke="#28b428" strokeWidth="3" /></svg>指定位置 <Count>(5)</Count></Left>
            <Right>
              <PushButton $w={23} $h={23}><svg width="18" height="18" viewBox="0 0 18 18"><path d="M11 2V10M7 6H15" stroke="#222" strokeWidth="1.300" /><path d="M2 5Q2 12 6 12" fill="none" stroke="#e07a1c" strokeWidth="2" /><path d="M5 9 10 12.500 5 16Z" fill="#e07a1c" /><path d="M10 15.500H17" stroke="#222" strokeWidth="2" strokeDasharray="2 1" /></svg></PushButton>
              <PushButton $w={31} $h={31}><svg width="22" height="22" viewBox="0 0 22 22" fill="none"><circle cx="11" cy="11" r="5.500" stroke="#d81616" strokeWidth="1.500" /><path d="M11 2V20M2 11H20" stroke="#222" /><path d="M11 6V16M6 11H16" stroke="#d81616" strokeWidth="1.300" /></svg></PushButton>
            </Right>
          </Row>
        </Body>
        <SectionHead t="父视图" />
        <SectionHead t="视图原点" up />
        <Body $h={207} $t={6}>
          <Row $h={20}>方向<Combo h={19}>正交的</Combo></Row>
          <HotRow $h={31}>
            <Left><svg width="15" height="15" viewBox="0 0 15 15"><path d="M1.500 2 4 14" stroke="#1b1b80" strokeWidth="1.500" /><path d="M2 2Q5 3 7 1.500T13 1V8Q10 7 8 8.500T3.500 9Z" fill="#fff" stroke="#111" strokeWidth=".8" /><path d="M3 3.500H14M3 6.500H14" stroke="#111" strokeWidth="1.500" strokeDasharray="2 1.500" /><path d="M4.500 5H13M4.500 8H9" stroke="#111" strokeWidth="1.500" strokeDasharray="1.500 2" /></svg>指定位置</Left>
            <PushButton $hot $w={30} $h={31}><svg width="24" height="24" viewBox="0 0 24 24" fill="none"><rect x="2" y="11" width="17" height="10" fill="#fff" stroke="#222" strokeWidth="1.200" /><Dot x={10.500} y={16} r={1.800} /><path d="M16 3V14M10.500 8.500H21.500M14 5 16 3 18 5M14 12 16 14 18 12M12.500 6.500 10.500 8.500 12.500 10.500M19.500 6.500 21.500 8.500 19.500 10.500" stroke="#c8401c" strokeWidth="1.400" /></svg></PushButton>
          </HotRow>
          <SubPanel $h={111}>
            <SubHead $h={20}>放置<Chev up /></SubHead>
            <MethodRow $h={30}>方法<Combo h={25} icon={<svg width="16" height="16" viewBox="0 0 16 16" fill="none"><rect x="1" y="10" width="5" height="4.500" stroke="#222" /><rect x="9.500" y="2" width="5" height="5" stroke="#222" /><path d="M4 12 13 4M8 1l3 3M15 8l-2-2" stroke={R} strokeWidth="1.300" /></svg>}>铰链副</Combo></MethodRow>
            <TrackHead $h={22}>跟踪<Chev /></TrackHead>
            <Row $h={16}><Left><Check />关联对齐</Left></Row>
          </SubPanel>
          <MovePanel $h={23}><SubHead $h={19}>移动视图<Chev /></SubHead></MovePanel>
        </Body>
        <SectionHead t="设置" />
        <SectionHead t="预览" />
      </Sections>
      <Scroll>
        <ScrollBtn><svg width="6" height="4" viewBox="0 0 6 4"><path d="M0 4H6L3 0Z" fill="#444" /></svg></ScrollBtn>
        <Thumb><svg width="7" height="8"><path d="M0 .5H7M0 3H7M0 5.500H7M0 8H7" stroke="#555" /></svg></Thumb>
        <ScrollBtn><Dn c="#444" /></ScrollBtn>
      </Scroll>
    </DialogMain>
    <DialogFoot><CloseBtn>关闭</CloseBtn></DialogFoot>
  </Dialog>
);

/* Tapered callout arrow from tail (x1,y1) to tip (x2,y2). */
const Arrow = ({ p, head = 19, half = 7.5 }: { p: number[]; head?: number; half?: number }) => {
  const [x1, y1, x2, y2] = p;
  const len = Math.hypot(x2 - x1, y2 - y1);
  const ux = (x2 - x1) / len;
  const uy = (y2 - y1) / len;
  const at = (d: number, s: number) => `${(x1 + ux * d - uy * s).toFixed(1)},${(y1 + uy * d + ux * s).toFixed(1)}`;
  const neck = len - head + 3;
  return <polygon points={[at(0, 0.8), at(neck, 3), at(len - head, half), at(len, 0), at(len - head, -half), at(neck, -3), at(0, -0.8)].join(" ")} fill="#f01c24" />;
};

export default function App() {
  return (
    <Page>
      <GlobalStyle />
      <TopEdge><TopEdgeTab /></TopEdge>
      <Header />
      <RibbonBar />
      <SelectionBar />
      <Tabs>
        <Tab><PrtIcon /><span>等距窄槽工艺分析及加工<Half>.prt</Half></span><Gap $w={3} /><ClipIcon c="#333" /></Tab>
        <Tab $active><PrtIcon /><Half>55.prt</Half><Gap $w={2} /><ClipIcon c="#fff" /><Gap $w={1} /><svg width="9" height="9"><path d="M1 1 8 8M8 1 1 8" stroke="#bbb" strokeWidth="2" /></svg></Tab>
      </Tabs>
      <Workspace><Sheet><Drawing /></Sheet></Workspace>
      <StatusBar>
        <StatusCell $w={567} /><StatusCell $w={743} /><StatusCell $w={20} />
        <StatusCell $w={75}>
          <svg width="16" height="16"><rect width="16" height="16" fill="#7f97a3" /><path d="M2 3 13 2V9L5 10 6 14" fill="#666" stroke="#666" /><path d="M4 4 12 8M5 8 12 3" stroke="#999" strokeDasharray="2 2" strokeWidth="2" /></svg>
          <svg width="16" height="16"><path d="M.7 4V.7H4M12 .7H15.300V4M15.300 12V15.300H12M4 15.300H.7V12" fill="none" stroke="#888" strokeWidth="1.300" /><rect x="3.500" y="4" width="9" height="8" fill="#fff" stroke="#444" strokeWidth="1.400" /><rect x="5" y="5.500" width="6" height="5" fill="#3d84dc" /></svg>
        </StatusCell>
      </StatusBar>
      <SectionDialog />
      <Overlay width="1424" height="860" viewBox="0 0 1424 860">
        <g fill="none" stroke="#f01c24">
          <ellipse cx="708.300" cy="412" rx="21" ry="10.700" strokeWidth="3.200" />
          <ellipse cx="803.500" cy="442.300" rx="26" ry="10.700" strokeWidth="3.200" />
          <ellipse cx="1162.300" cy="385" rx="28" ry="13.300" strokeWidth="3.400" />
        </g>
        <Arrow p={[618, 409, 686, 410.500]} head={18} />
        <Arrow p={[854.500, 492, 824.300, 457.700]} head={17} />
        <Arrow p={[1084.500, 435, 1141, 401]} />
        <Arrow p={[905.500, 517.500, 955, 486]} />
        <Arrow p={[883.300, 635, 955, 600.300]} />
      </Overlay>
    </Page>
  );
}
